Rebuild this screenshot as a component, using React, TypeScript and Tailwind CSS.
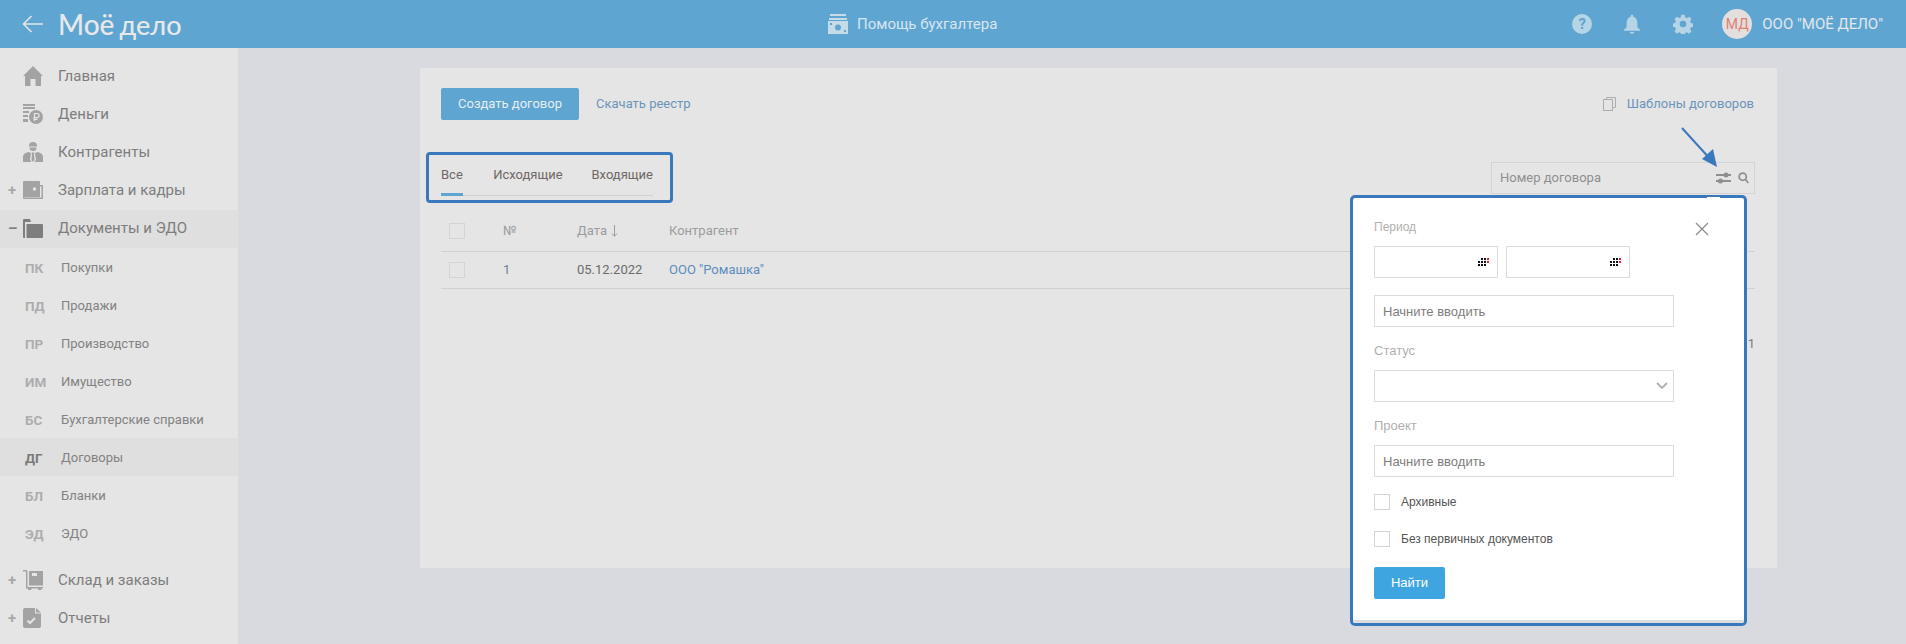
import React from "react";

const font = "font-['Roboto',sans-serif]";

function Home() {
  return <svg width="20" height="20" viewBox="0 0 20 20" fill="#a3a3a3"><path d="M10 0 L20 10 L18 10 L18 20 L12.5 20 L12.5 13 L7.5 13 L7.5 20 L2 20 L2 10 L0 10 Z" /></svg>;
}
function Money() {
  return (
    <svg width="20" height="20" viewBox="0 0 20 20" fill="#a3a3a3">
      <rect x="0" y="0" width="12" height="2" /><rect x="0" y="3" width="12" height="2" /><rect x="0" y="7" width="6" height="2" /><rect x="0" y="11" width="5" height="2" /><rect x="0" y="15" width="5" height="3" />
      <circle cx="13" cy="13" r="7" />
      <path d="M11.5 17V9.5h2.5a2 2 0 010 4.2h-3.5M10.5 15.3h4" stroke="#e5e5e5" strokeWidth="1.2" fill="none" />
    </svg>
  );
}
function Person() {
  return (
    <svg width="20" height="20" viewBox="0 0 20 20" fill="#a3a3a3">
      <path d="M6 4a4 4 0 018 0v.5H6z" /><path d="M6.5 5.5h7a3.5 3.5 0 01-7 0z" />
      <path d="M0 20v-5c0-3 3-4.500 6-5l2 1.500-1 6 1.500 2.500zM20 20v-5c0-3-3-4.500-6-5l-2 1.500 1 6-1.500 2.500z" />
      <path d="M8.500 10.500h3l-.5 2 .5 5.500-1.500 2-1.500-2 .5-5.500z" />
    </svg>
  );
}
function Wallet() {
  return (
    <svg width="20" height="19" viewBox="0 0 20 19" fill="#a3a3a3">
      <path d="M1 0h15a1 1 0 011 1v15H1a1 1 0 01-1-1V1a1 1 0 011-1z" />
      <path d="M0 15v2a1 1 0 001 1h19V4h-3v1.500h1.500v11H1.500V15z" />
      <circle cx="11.500" cy="8" r="1.700" fill="#e5e5e5" />
    </svg>
  );
}
function Folder() {
  return (
    <svg width="20" height="19" viewBox="0 0 20 19" fill="#7e7e7e">
      <path d="M0 1a1 1 0 011-1h6l1 3H2v16H1a1 1 0 01-1-1z" />
      <path d="M3.500 5H19a1 1 0 011 1v12a1 1 0 01-1 1H3.500z" />
    </svg>
  );
}
function Cart() {
  return (
    <svg width="20" height="20" viewBox="0 0 20 20" fill="#a3a3a3">
      <path d="M0 0h4v1h.5V17H20v1.500H3V1.500H0z" />
      <rect x="6" y="1" width="14" height="14.500" /><rect x="9" y="3" width="5" height="3" fill="#e5e5e5" />
      <rect x="5" y="18" width="3.500" height="2" /><rect x="15" y="18" width="3.500" height="2" />
    </svg>
  );
}
function Report() {
  return (
    <svg width="18" height="20" viewBox="0 0 18 20" fill="#a3a3a3">
      <path d="M2 0h10v5.500h6V18a2 2 0 01-2 2H2a2 2 0 01-2-2V2a2 2 0 012-2z" />
      <path d="M13 0l5 4.500h-5z" />
      <path d="M4.500 12.500l2.500 2.500L12 10" stroke="#e5e5e5" strokeWidth="2" fill="none" />
    </svg>
  );
}

const top1 = [
  { label: "Главная", icon: <Home /> },
  { label: "Деньги", icon: <Money /> },
  { label: "Контрагенты", icon: <Person /> },
  { label: "Зарплата и кадры", icon: <Wallet />, sign: "+" },
];
const subs = [
  ["ПК", "Покупки"],
  ["ПД", "Продажи"],
  ["ПР", "Производство"],
  ["ИМ", "Имущество"],
  ["БС", "Бухгалтерские справки"],
  ["ДГ", "Договоры"],
  ["БЛ", "Бланки"],
  ["ЭД", "ЭДО"],
];

function NavRow({ label, icon, sign, active, lifted }: { label: string; icon: React.ReactNode; sign?: string; active?: boolean; lifted?: boolean }) {
  return (
    <div className={`flex h-[38px] items-center ${lifted ? "pb-[2px]" : ""} ${active ? "bg-[#dfdfdf]" : ""}`}>
      <span className={`w-[23px] pl-[8px] text-[15px] font-bold leading-none ${active ? "text-[#7e7e7e]" : "text-[#a8a8a8]"}`}>{sign}</span>
      <span className="flex w-[35px] items-center justify-start">{icon}</span>
      <span className="text-[15px] text-[#7d7d7d]">{label}</span>
    </div>
  );
}

function Dots() {
  const rows = [
    [0, 1, 1, 2],
    [1, 1, 1, 2],
    [1, 1, 1, 0],
  ];
  return (
    <svg width="11" height="8" viewBox="0 0 11 8" shapeRendering="crispEdges">
      {rows.map((r, y) =>
        r.map((v, x) => (v ? <rect key={`${x}-${y}`} x={x * 3} y={y * 3} width="2" height="2" fill={v === 2 ? "#e0202e" : "#111"} /> : null)),
      )}
    </svg>
  );
}

function Field({ children, className }: { children?: React.ReactNode; className?: string }) {
  return <div className={`flex h-[32px] items-center border border-[#dcdcdc] bg-white ${className ?? ""}`}>{children}</div>;
}

function Check({ bg }: { bg?: string }) {
  return <span className={`block h-[16px] w-[16px] border border-[#d4d4d4] ${bg ?? "bg-white"}`} />;
}

export default function App() {
  return (
    <div className={`relative h-[644px] w-[1906px] overflow-hidden bg-[#d9dadf] ${font}`}>
      <header className="flex h-[48px] items-center bg-[#5fa5d1]">
        <div className="flex w-[238px] items-center pl-[22px]">
          <svg width="22" height="18" viewBox="0 0 22 18" fill="none" stroke="#e5e5e5" strokeWidth="1.600"><path d="M21 9H1.500M9.500 1L1.500 9l8 8" /></svg>
          <span className="ml-[14px] flex items-baseline gap-[5px] font-['Lato',sans-serif] font-medium leading-none text-[#e8e8e8]">
            <span className="text-[28px]">Моё</span>
            <span className="text-[27px]">дело</span>
          </span>
        </div>
        <div className="flex flex-1 items-center pl-[590px]">
          <svg width="20" height="20" viewBox="0 0 20 20" fill="#c5dbe8">
            <rect x="2" y="0" width="16" height="2" /><rect x="1" y="4" width="18" height="2" />
            <path d="M0 7h20v13H0z" /><circle cx="10" cy="13.500" r="3" fill="#5fa5d1" /><rect x="2" y="9" width="2" height="2" fill="#5fa5d1" /><rect x="16" y="16" width="2" height="2" fill="#5fa5d1" />
          </svg>
          <span className="ml-[9px] text-[15px] text-[#d8e6ef]">Помощь бухгалтера</span>
        </div>
        <div className="flex items-center pr-[23px]">
          <span className="flex h-[20px] w-[20px] items-center justify-center rounded-full bg-[#b5d4e5] text-[15px] font-bold text-[#5fa5d1]">?</span>
          <svg className="ml-[32px]" width="16" height="21" viewBox="0 0 18 22" fill="#b5d4e5"><path d="M9 0a1.500 1.500 0 011.500 1.500v.8C13.500 3 15 6 15 9v5l3 3v1H0v-1l3-3V9c0-3 1.500-6 4.500-6.700v-.8A1.500 1.500 0 019 0zM6.500 19.500h5a2.500 2 0 01-5 0z" /></svg>
          <svg className="ml-[33px]" width="20" height="20" viewBox="0 0 24 24" fill="#b5d4e5"><path fillRule="evenodd" d="M10 1h4l.6 3 2.200.9 2.600-1.700 2.800 2.800-1.700 2.600.9 2.200 3 .6v4l-3 .6-.9 2.200 1.700 2.600-2.800 2.800-2.600-1.700-2.200.9-.6 3h-4l-.6-3-2.200-.9-2.600 1.700-2.800-2.800 1.700-2.600-.9-2.200-3-.6v-4l3-.6.9-2.200-1.700-2.600 2.800-2.800 2.600 1.700 2.200-.9zM12 8a4 4 0 100 8 4 4 0 000-8z" /></svg>
          <span className="ml-[29px] flex h-[30px] w-[30px] items-center justify-center rounded-full bg-[#e4dfdf] text-[14px] text-[#e0806f]">МД</span>
          <span className="ml-[10px] text-[15px] text-[#e2e8ec]">ООО "МОЁ ДЕЛО"</span>
        </div>
      </header>

      <div className="flex h-[596px]">
        <aside className="w-[238px] bg-[#e5e5e5] pt-[10px]">
          {top1.map((r) => <NavRow key={r.label} {...r} lifted />)}
          <NavRow label="Документы и ЭДО" icon={<Folder />} sign="–" active lifted />
          {subs.map(([a, b]) => (
            <div key={a} className={`flex h-[38px] items-center pt-[2px] ${a === "ДГ" ? "bg-[#dfdfdf]" : ""}`}>
              <span className={`w-[61px] pl-[25px] text-[13.500px] font-bold ${a === "ДГ" ? "text-[#7a7a7a]" : "text-[#adadad]"}`}>{a}</span>
              <span className="text-[13px] text-[#828282]">{b}</span>
            </div>
          ))}
          <div className="h-[9px]" />
          <NavRow label="Склад и заказы" icon={<Cart />} sign="+" />
          <NavRow label="Отчеты" icon={<Report />} sign="+" />
        </aside>

        <main className="flex-1 pl-[182px] pt-[20px]">
          <section className="h-[500px] w-[1357px] bg-[#e5e5e5] pl-[21px] pr-[22px] pt-[20px]">
            <div className="flex h-[32px] items-center">
              <button className="h-[32px] w-[138px] rounded-[2px] bg-[#5fa5d1] text-[13px] text-[#e6eef3]">Создать договор</button>
              <span className="ml-[17px] text-[13px] text-[#6b94ba]">Скачать реестр</span>
              <span className="ml-auto mr-[1px] flex items-center">
                <svg width="13" height="14" viewBox="0 0 13 14" fill="none" stroke="#adadad"><path d="M3.500 2.500V.5h9v10h-3" /><rect x=".5" y="2.500" width="9" height="11" /></svg>
                <span className="ml-[11px] text-[13px] text-[#6b94ba]">Шаблоны договоров</span>
              </span>
            </div>
            <div className="mt-[42px] flex items-start justify-between">
              <div className="w-[212px] border-b border-[#d0d0d0] text-[13px] text-[#6f6767]">
                <div className="flex h-[33px] items-start pt-[3px]">
                  <span className="relative h-[30px] w-[53px]">Все<span className="absolute bottom-[-1px] left-0 h-[3px] w-[22px] bg-[#5fa5d1]" /></span>
                  <span className="w-[100px]">Исходящие</span>
                  <span>Входящие</span>
                </div>
              </div>
              <div className="flex h-[32px] w-[264px] items-center border border-[#d4d4d4] pl-[8px] text-[13px] text-[#8f8f8f]">
                <span>Номер договора</span>
                <svg className="ml-auto" width="15" height="12" viewBox="0 0 15 12" fill="#8f8f8f"><rect y="2" width="15" height="2" /><circle cx="10" cy="3" r="2.500" /><rect y="8" width="15" height="2" /><circle cx="4.500" cy="9" r="2.500" /></svg>
                <svg className="ml-[7px] mr-[5px]" width="11" height="12" viewBox="0 0 11 12" fill="none" stroke="#8f8f8f" strokeWidth="1.700"><circle cx="4.700" cy="4.700" r="3.600" /><path d="M7.300 7.300L10.300 11" /></svg>
              </div>
            </div>
            <div className="mt-[19px] flex h-[37px] items-center border-b border-[#d0d0d0] pb-[4px] text-[13px] text-[#9c9c9c]">
              <span className="w-[62px] pl-[8px]"><Check bg="bg-transparent" /></span>
              <span className="w-[74px]">№</span>
              <span className="flex w-[92px] items-center">Дата
                <svg className="ml-[4px]" width="7" height="12" viewBox="0 0 7 12" fill="none" stroke="#9c9c9c"><path d="M3.500 0v11M.8 8.500l2.700 2.700 2.700-2.700" /></svg>
              </span>
              <span>Контрагент</span>
            </div>
            <div className="flex h-[37px] items-center border-b border-[#d0d0d0] text-[13px]">
              <span className="w-[62px] pl-[8px]"><Check bg="bg-transparent" /></span>
              <span className="w-[74px] text-[#6d8198]">1</span>
              <span className="w-[92px] text-[#6b6b6b]">05.12.2022</span>
              <span className="text-[#5c8dbd]">ООО "Ромашка"</span>
            </div>
            <div className="mt-[47px] text-right text-[13px] leading-[15px] text-[#7d7d7d]">1</div>
          </section>
        </main>
      </div>

      {/* annotation outlining the tabs */}
      <div className="absolute left-[426px] top-[152px] h-[51px] w-[247px] rounded-[4px] border-[3px] border-[#3a78bd]" />

      {/* annotation arrow */}
      <svg className="absolute left-[1678px] top-[124px]" width="44" height="48" viewBox="0 0 44 48" fill="none">
        <path d="M4 4L34 37" stroke="#3a78bd" strokeWidth="2" />
        <path d="M39 43L35 25L24 35Z" fill="#3a78bd" />
      </svg>

      {/* filter popup */}
      <div className="absolute left-[1350px] top-[195px] h-[431px] w-[397px] rounded-[5px] border-[3px] border-[#3a78bd] bg-white">
        <div className="relative h-full rounded-b-[4px] border-b-[3px] border-[#dddddd] pl-[21px] pt-[22px] font-['Liberation_Sans',sans-serif]">
          <span className="absolute left-[354px] top-[-1px] h-[1px] w-[13px] bg-white" />
          <svg className="absolute left-[342px] top-[24px]" width="14" height="14" viewBox="0 0 14 14" stroke="#8a8a8a" strokeWidth="1.200"><path d="M1 1l12 12M13 1L1 13" /></svg>
          <div className="text-[12px] leading-[14px] text-[#b0b0b0]">Период</div>
          <div className="mt-[12px] flex gap-[8px]">
            <Field className="w-[124px] justify-end pr-[8px]"><Dots /></Field>
            <Field className="w-[124px] justify-end pr-[8px]"><Dots /></Field>
          </div>
          <Field className="mt-[17px] w-[300px] pl-[8px] pt-[1px] text-[13px] text-[#7d7d7d]">Начните вводить</Field>
          <div className="mt-[16px] text-[13px] leading-[15px] text-[#b0b0b0]">Статус</div>
          <Field className="mt-[12px] w-[300px] justify-end pr-[5px]">
            <svg width="12" height="8" viewBox="0 0 12 8" fill="none" stroke="#b0b0b0" strokeWidth="1.800"><path d="M1 1l5 5 5-5" /></svg>
          </Field>
          <div className="mt-[16px] text-[13px] leading-[15px] text-[#b0b0b0]">Проект</div>
          <Field className="mt-[12px] w-[300px] pl-[8px] pt-[1px] text-[13px] text-[#7d7d7d]">Начните вводить</Field>
          <label className="mt-[17px] flex items-center text-[12px] leading-[16px] text-[#555]"><Check /><span className="ml-[11px]">Архивные</span></label>
          <label className="mt-[21px] flex items-center text-[12px] leading-[16px] text-[#555]"><Check /><span className="ml-[11px]">Без первичных документов</span></label>
          <button className="mt-[20px] h-[32px] w-[71px] rounded-[2px] bg-[#3ea5e0] text-[13px] text-white">Найти</button>
        </div>
      </div>
    </div>
  );
}
